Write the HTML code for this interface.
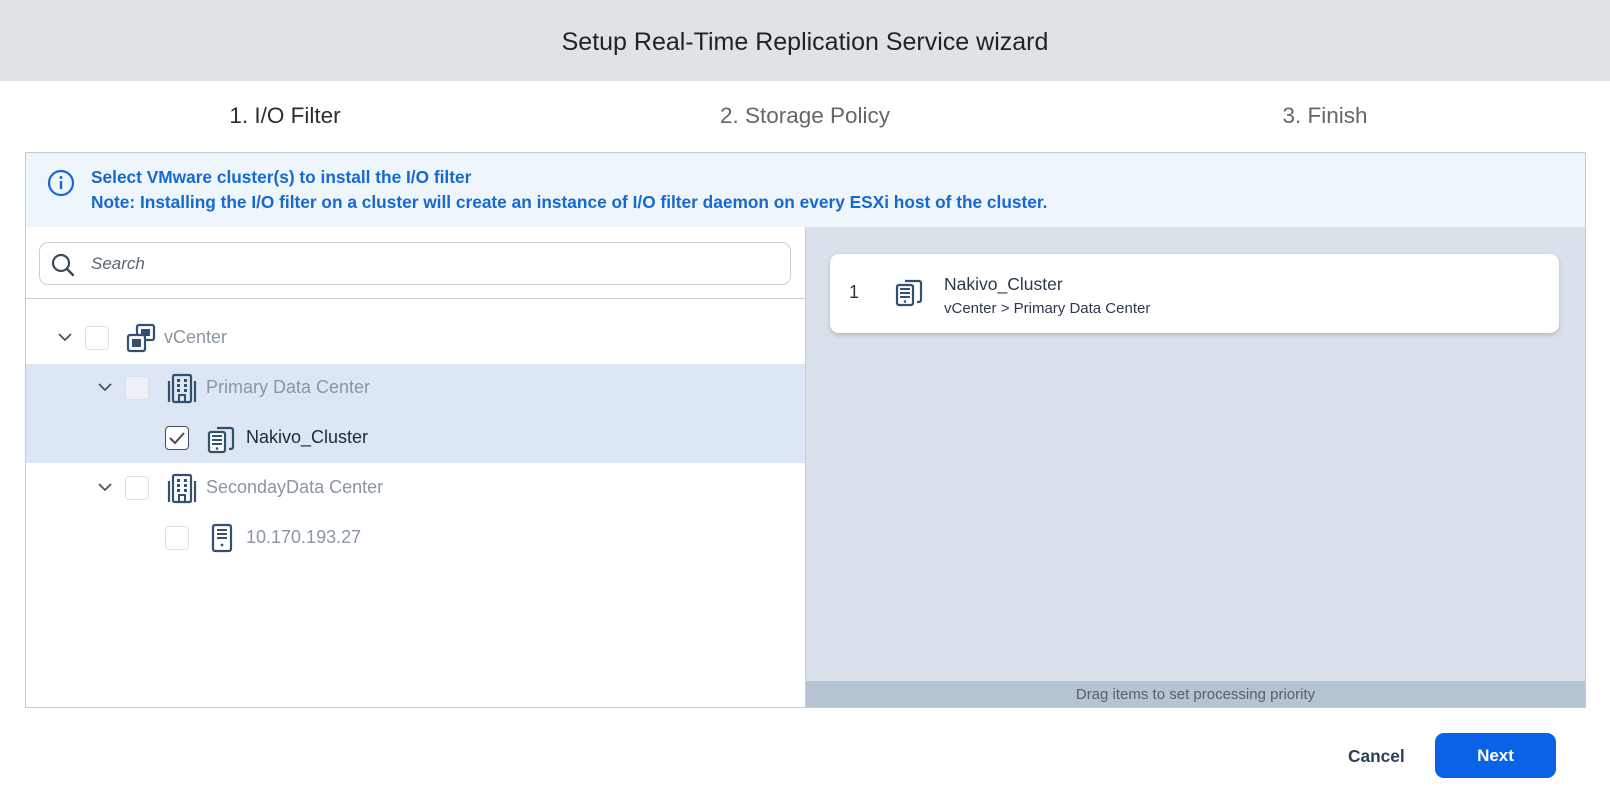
<!DOCTYPE html>
<html><head><meta charset="utf-8"><style>
*{box-sizing:border-box;margin:0;padding:0}
body{width:1610px;height:801px;background:#fff;font-family:"Liberation Sans",Arial,sans-serif;position:relative;overflow:hidden}
.abs{position:absolute}
.hdr{left:0;top:0;width:1610px;height:81px;background:#dfe2e6;text-align:center;line-height:84px;font-size:25px;color:#1f2328}
.step{top:103px;font-size:22.5px;color:#666;transform:translateX(-50%);white-space:nowrap}
.box{left:25px;top:152px;width:1561px;height:556px;border:1px solid #c6cbd2}
.info{left:26px;top:153px;width:1559px;height:74px;background:#eef5fb}
.info .t{left:65px;font-size:17.3px;font-weight:bold;color:#1669d0;white-space:nowrap}
.right{left:805px;top:227px;width:780px;height:480px;background:#d9e1ea;border-left:1px solid #c9ced6}
.foot{left:0;bottom:0;width:100%;height:26px;background:#b6c3d3;text-align:center;font-size:15px;line-height:28px;color:#56606e}
.search{left:39px;top:242px;width:752px;height:43px;border:1px solid #c9ced6;border-radius:9px;background:#fff}
.search span{position:absolute;left:51px;top:11px;font-size:17px;font-style:italic;color:#5d6570}
.sep{left:26px;top:298px;width:779px;height:1px;background:#c9ced6}
.hl{left:26px;top:364px;width:779px;height:99px;background:#dde6f4}
.cb{width:24px;height:24px;border:1px solid #dde1e6;border-radius:4px;background:#fff}
.lbl{font-size:18px;color:#8b95a3;white-space:nowrap}
.card{left:830px;top:254px;width:729px;height:79px;background:#fff;border-radius:9px;box-shadow:0 2px 5px rgba(0,0,0,.18)}
.btn{left:1435px;top:733px;width:121px;height:45px;background:#0a63e6;border-radius:9px;color:#fff;font-weight:bold;font-size:17px;text-align:center;line-height:45px}
</style></head><body>
<div class="abs hdr">Setup Real-Time Replication Service wizard</div>
<div class="abs step" style="left:285px;color:#2a2e33">1. I/O Filter</div>
<div class="abs step" style="left:805px">2. Storage Policy</div>
<div class="abs step" style="left:1325px">3. Finish</div>

<div class="abs box"></div>
<div class="abs info">
 <svg class="abs" style="left:21px;top:16px" width="28" height="28" viewBox="0 0 28 28"><circle cx="14" cy="14" r="12" fill="none" stroke="#1669d0" stroke-width="2.2"/><rect x="12.8" y="12" width="2.4" height="8" fill="#1669d0"/><circle cx="14" cy="8.5" r="1.5" fill="#1669d0"/></svg>
 <div class="abs t" style="top:14px">Select VMware cluster(s) to install the I/O filter</div>
 <div class="abs t" style="top:39px">Note: Installing the I/O filter on a cluster will create an instance of I/O filter daemon on every ESXi host of the cluster.</div>
</div>

<div class="abs search">
 <svg class="abs" style="left:10px;top:9px" width="26" height="26" viewBox="0 0 26 26"><circle cx="11" cy="11" r="8" fill="none" stroke="#3e4956" stroke-width="2.2"/><line x1="17" y1="17" x2="23" y2="23" stroke="#3e4956" stroke-width="2.4" stroke-linecap="round"/></svg>
 <span>Search</span>
</div>
<div class="abs sep"></div>
<div class="abs hl"></div>

<svg class="abs" style="left:57px;top:331px" width="16" height="12" viewBox="0 0 16 12"><path d="M2 3l6 6 6-6" fill="none" stroke="#4a5563" stroke-width="1.8"/></svg>
<svg class="abs" style="left:97px;top:381px" width="16" height="12" viewBox="0 0 16 12"><path d="M2 3l6 6 6-6" fill="none" stroke="#4a5563" stroke-width="1.8"/></svg>
<svg class="abs" style="left:97px;top:481px" width="16" height="12" viewBox="0 0 16 12"><path d="M2 3l6 6 6-6" fill="none" stroke="#4a5563" stroke-width="1.8"/></svg>

<div class="abs cb" style="left:85px;top:326px"></div>
<div class="abs cb" style="left:125px;top:376px;background:#edf2f9"></div>
<div class="abs cb" style="left:165px;top:426px;border:1.5px solid #44505e;background:#fff"><svg width="22" height="22" viewBox="0 0 22 22"><path d="M4 11l5 5 9-10" fill="none" stroke="#44505e" stroke-width="2"/></svg></div>
<div class="abs cb" style="left:125px;top:476px"></div>
<div class="abs cb" style="left:165px;top:526px"></div>

<svg class="abs" style="left:126px;top:323px" width="30" height="30" viewBox="0 0 30 30"><rect x="11" y="2" width="17" height="15" rx="2" fill="#fff" stroke="#32506f" stroke-width="2.2"/><rect x="15" y="6" width="9" height="7" fill="#32506f"/><rect x="2" y="12" width="17" height="16" rx="2" fill="#fff" stroke="#32506f" stroke-width="2.2"/><rect x="6" y="16" width="9" height="8" fill="#32506f"/></svg>
<svg class="abs" style="left:167px;top:373px" width="30" height="31" viewBox="0 0 30 31"><rect x="6" y="2" width="18" height="27" rx="1.5" fill="none" stroke="#32506f" stroke-width="2.2"/><path d="M2 8v21M28 8v21" stroke="#32506f" stroke-width="2.2"/><g fill="#32506f"><rect x="10" y="6" width="3" height="3"/><rect x="17" y="6" width="3" height="3"/><rect x="10" y="11" width="3" height="3"/><rect x="17" y="11" width="3" height="3"/><rect x="10" y="16" width="3" height="3"/><rect x="17" y="16" width="3" height="3"/></g><rect x="12" y="22" width="6" height="7" fill="none" stroke="#32506f" stroke-width="2"/></svg>
<svg class="abs" style="left:167px;top:473px" width="30" height="31" viewBox="0 0 30 31"><rect x="6" y="2" width="18" height="27" rx="1.5" fill="none" stroke="#32506f" stroke-width="2.2"/><path d="M2 8v21M28 8v21" stroke="#32506f" stroke-width="2.2"/><g fill="#32506f"><rect x="10" y="6" width="3" height="3"/><rect x="17" y="6" width="3" height="3"/><rect x="10" y="11" width="3" height="3"/><rect x="17" y="11" width="3" height="3"/><rect x="10" y="16" width="3" height="3"/><rect x="17" y="16" width="3" height="3"/></g><rect x="12" y="22" width="6" height="7" fill="none" stroke="#32506f" stroke-width="2"/></svg>
<svg class="abs" style="left:207px;top:424px" width="30" height="30" viewBox="0 0 30 30"><path d="M10 4h14a2 2 0 0 1 2 2v17a2 2 0 0 1-2 2h-2" fill="none" stroke="#32506f" stroke-width="2.2"/><rect x="2" y="8" width="16" height="20" rx="2" fill="#fff" stroke="#32506f" stroke-width="2.2"/><g fill="#32506f"><rect x="5" y="11" width="10" height="2"/><rect x="5" y="15" width="10" height="2"/><rect x="5" y="19" width="10" height="2"/><circle cx="10" cy="24.5" r="1.3"/></g></svg>
<svg class="abs" style="left:211px;top:523px" width="22" height="30" viewBox="0 0 22 30"><rect x="2" y="2" width="18" height="26" rx="2" fill="none" stroke="#32506f" stroke-width="2.2"/><g fill="#32506f"><rect x="6" y="6" width="10" height="2"/><rect x="6" y="10" width="10" height="2"/><rect x="6" y="14" width="10" height="2"/><circle cx="11" cy="22" r="1.4"/></g></svg>

<div class="abs lbl" style="left:164px;top:327px">vCenter</div>
<div class="abs lbl" style="left:206px;top:377px">Primary Data Center</div>
<div class="abs lbl" style="left:246px;top:427px;color:#1f2a38">Nakivo_Cluster</div>
<div class="abs lbl" style="left:206px;top:477px">SecondayData Center</div>
<div class="abs lbl" style="left:246px;top:527px">10.170.193.27</div>

<div class="abs right"><div class="abs foot">Drag items to set processing priority</div></div>
<div class="abs card">
 <div class="abs" style="left:19px;top:28px;font-size:18px;color:#2a323c">1</div>
 <svg class="abs" style="left:65px;top:23px" width="30" height="30" viewBox="0 0 30 30"><path d="M10 4h14a2 2 0 0 1 2 2v17a2 2 0 0 1-2 2h-2" fill="none" stroke="#32506f" stroke-width="2.2"/><rect x="2" y="8" width="16" height="20" rx="2" fill="#fff" stroke="#32506f" stroke-width="2.2"/><g fill="#32506f"><rect x="5" y="11" width="10" height="2"/><rect x="5" y="15" width="10" height="2"/><rect x="5" y="19" width="10" height="2"/><circle cx="10" cy="24.5" r="1.3"/></g></svg>
 <div class="abs" style="left:114px;top:20px;font-size:17.5px;color:#2a3a4e">Nakivo_Cluster</div>
 <div class="abs" style="left:114px;top:46px;font-size:15px;color:#2a3a4e">vCenter &gt; Primary Data Center</div>
</div>

<div class="abs" style="left:1348px;top:746px;font-size:17.3px;font-weight:bold;color:#2b3f57">Cancel</div>
<div class="abs btn">Next</div>
</body></html>
